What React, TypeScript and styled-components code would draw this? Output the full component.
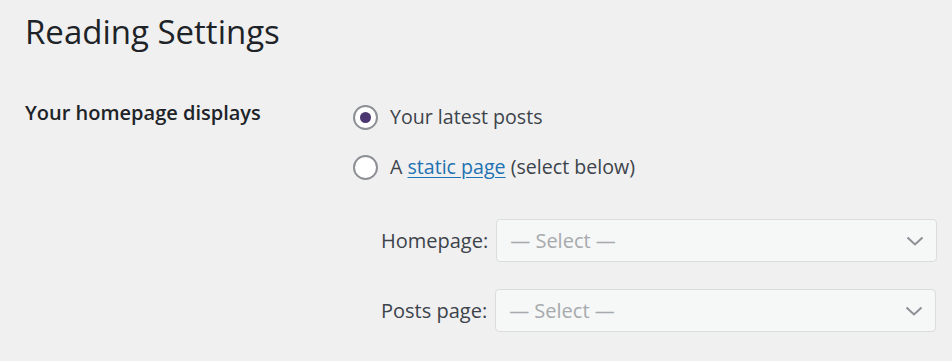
import React from "react";
import styled, { createGlobalStyle } from "styled-components";

const Global = createGlobalStyle`
  html, body { margin: 0; padding: 0; background: #f0f0f1; }
  body { font-family: "Open Sans", "Noto Sans", sans-serif; }
`;

const Page = styled.div`
  padding: 10px 0 0 25px;
  width: 952px;
  height: 361px;
  box-sizing: border-box;
  overflow: hidden;
`;

const Title = styled.h1`
  margin: 0;
  font-size: 33px;
  font-weight: 400;
  line-height: 44px;
  color: #1d2327;
`;

const FormRow = styled.div`
  display: grid;
  grid-template-columns: 328px 1fr;
  margin-top: 46px;
`;

const RowLabel = styled.div`
  font-size: 20px;
  font-weight: 600;
  color: #1d2327;
  line-height: 26px;
`;

const Options = styled.div`
  display: flex;
  flex-direction: column;
  gap: 24px;
  margin-top: 4px;
`;

const RadioRow = styled.label`
  display: flex;
  align-items: center;
  gap: 12px;
  font-size: 19.6px;
  color: #3c434a;
  line-height: 26px;
`;

const Radio = styled.span<{ $checked?: boolean }>`
  width: 25px;
  height: 25px;
  box-sizing: border-box;
  border: 2px solid #8c8f94;
  border-radius: 50%;
  background: #fff;
  display: flex;
  align-items: center;
  justify-content: center;
  flex-shrink: 0;
  &::after {
    content: "";
    display: ${(p) => (p.$checked ? "block" : "none")};
    width: 11px;
    height: 11px;
    border-radius: 50%;
    background: #4a3670;
  }
`;

const Link = styled.a`
  color: #2271b1;
  text-decoration: underline;
  text-underline-offset: 3px;
`;

const SubSettings = styled.div`
  display: flex;
  flex-direction: column;
  gap: 27px;
  padding-left: 28px;
  margin-top: 39px;
`;

const SelectRow = styled.div`
  display: flex;
  align-items: center;
  gap: 8px;
`;

const SelectLabel = styled.span`
  font-size: 20px;
  color: #3c434a;
`;

const SelectBox = styled.div`
  width: 441px;
  height: 43px;
  box-sizing: border-box;
  border: 1px solid #dcdcde;
  border-radius: 4px;
  background: #f6f7f7;
  display: flex;
  align-items: center;
  justify-content: space-between;
  padding: 0 12px 0 13px;
  font-size: 20px;
  color: #a7aaad;
`;

const Chevron = () => (
  <svg width="18" height="10" viewBox="0 0 18 10" fill="none">
    <path d="M1.5 1.5 L9 8.5 L16.5 1.5" stroke="#8c8f94" strokeWidth="2" />
  </svg>
);

export default function App() {
  return (
    <>
      <Global />
      <Page>
        <Title>Reading Settings</Title>
        <FormRow>
          <RowLabel>Your homepage displays</RowLabel>
          <div>
            <Options>
              <RadioRow>
                <Radio $checked />
                Your latest posts
              </RadioRow>
              <RadioRow>
                <Radio />
                <span>
                  A <Link href="#">static page</Link> (select below)
                </span>
              </RadioRow>
            </Options>
            <SubSettings>
              <SelectRow>
                <SelectLabel>Homepage:</SelectLabel>
                <SelectBox>
                  <span>— Select —</span>
                  <Chevron />
                </SelectBox>
              </SelectRow>
              <SelectRow>
                <SelectLabel>Posts page:</SelectLabel>
                <SelectBox>
                  <span>— Select —</span>
                  <Chevron />
                </SelectBox>
              </SelectRow>
            </SubSettings>
          </div>
        </FormRow>
      </Page>
    </>
  );
}
